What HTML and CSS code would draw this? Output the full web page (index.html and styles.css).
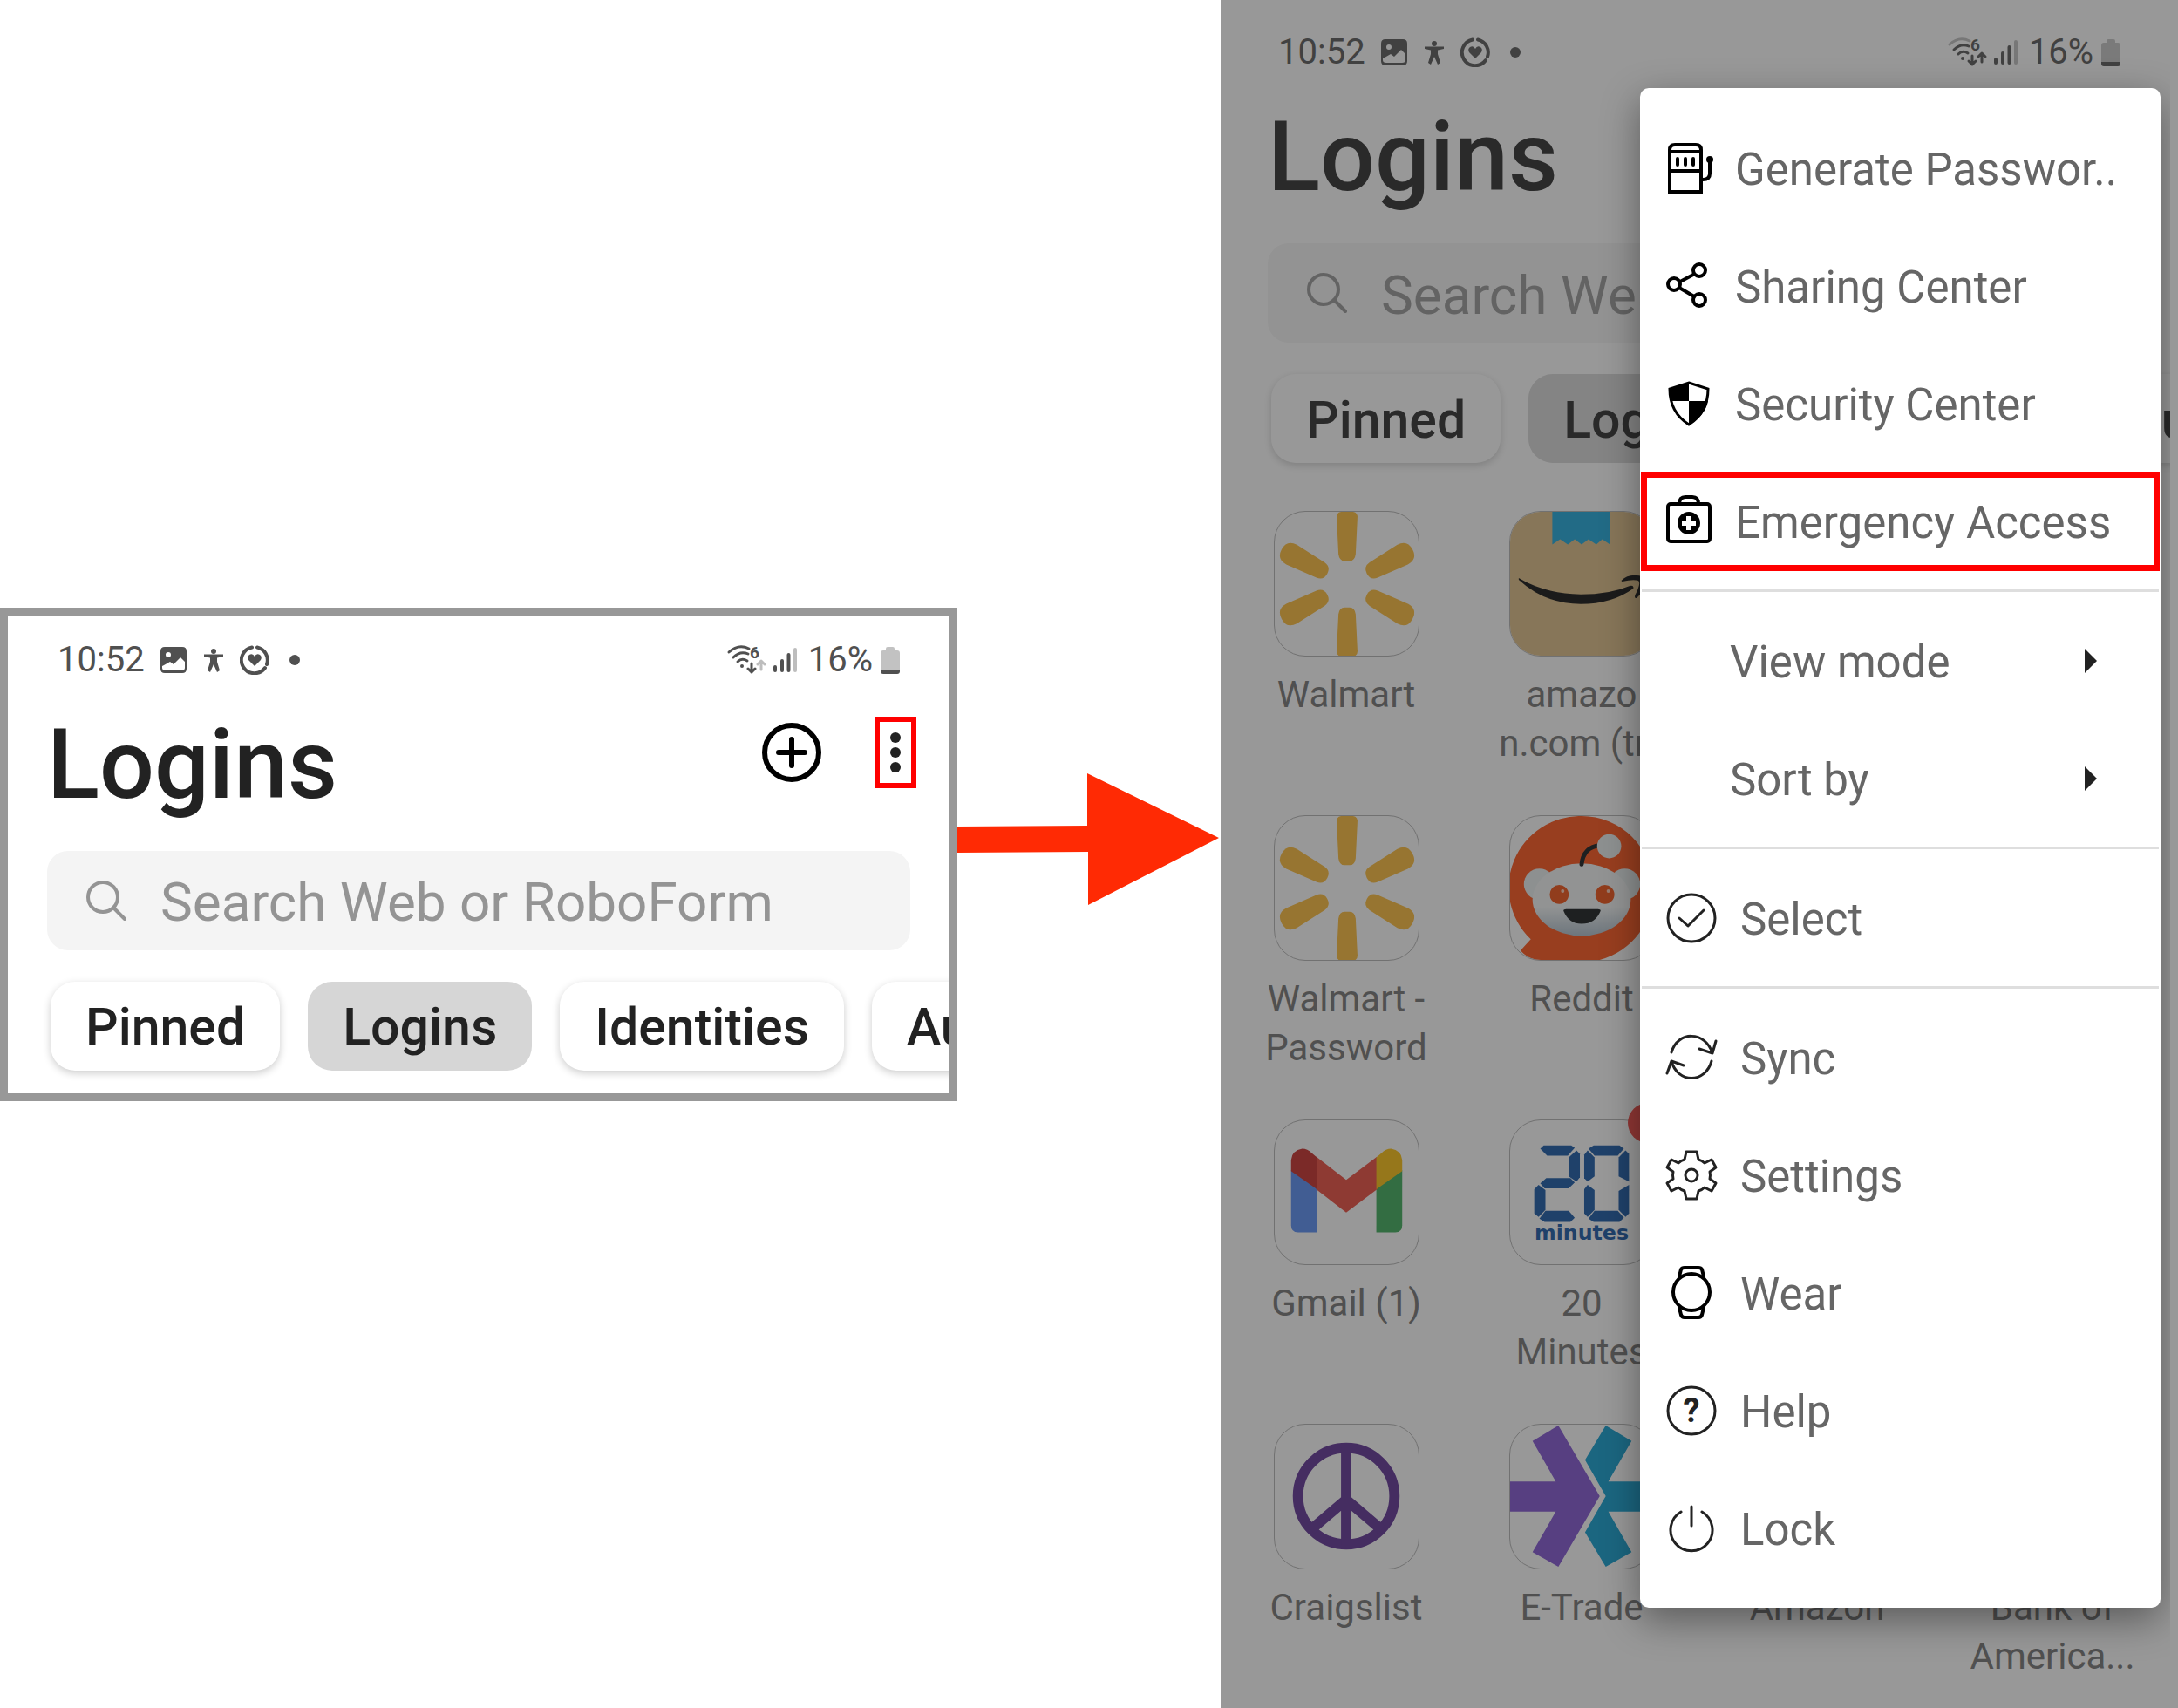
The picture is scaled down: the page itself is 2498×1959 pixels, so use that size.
FILE: index.html
```html
<!DOCTYPE html>
<html lang="en">
<head>
<meta charset="UTF-8">
<meta name="viewport" content="width=device-width, initial-scale=1.0">
<title>Logins - Emergency Access</title>
<link rel="stylesheet" href="styles.css">
</head>
<body>

<!-- shared drawings -->
<svg class="sprite" aria-hidden="true">
    <symbol id="i-image" viewBox="0 0 32 32">
        <path fill-rule="evenodd" d="M6 1H26Q31 1 31 6V26Q31 31 26 31H6Q1 31 1 26V6Q1 1 6 1ZM3 23V25Q3 28 7 28H25Q29 28 29 25V18L24 13L16 21L12 18L5 22ZM10 7A3 3 0 1 0 10 13A3 3 0 1 0 10 7Z"/>
    </symbol>
    <symbol id="i-person" viewBox="0 0 26 32">
        <circle cx="13" cy="6" r="3"/>
        <path d="M2 9.500L24 9.500L24 12L17 13.500V18L20 28L17 30L13 21L9 30L6 28L9 18V13.500L2 12Z"/>
    </symbol>
    <symbol id="i-heart" viewBox="0 0 34 34">
        <path class="line-4" d="M14 2.500A15 15 0 1 0 29 26M20 2.500A15 15 0 0 1 31 22"/>
        <path d="M17 24L10 17Q8 13 11 11Q15 9 17 13Q19 9 23 11Q26 13 24 17Z"/>
    </symbol>
    <symbol id="i-bars" viewBox="0 0 28 32">
        <path class="line-4" d="M3 24V28M11 17V28M18.500 10V28"/>
        <path class="line-4 faint" d="M26 4V28"/>
    </symbol>
    <symbol id="i-battery" viewBox="0 0 22 32">
        <path class="faint-fill" d="M6 3Q6 1 8 1H14Q16 1 16 3V5H19Q22 5 22 8V27H0V8Q0 5 3 5H6Z"/>
        <path d="M0 27H22V29Q22 32 19 32H3Q0 32 0 29Z"/>
    </symbol>
    <symbol id="i-search" viewBox="0 0 46 46">
        <circle class="line-4" cx="19" cy="19" r="17"/>
        <path class="line-4" d="M31 31L44 44"/>
    </symbol>
    <symbol id="i-plus" viewBox="0 0 68 68">
        <circle class="line-6" cx="34" cy="34" r="31"/>
        <path class="line-6" d="M34 19V49M19 34H49"/>
    </symbol>
    <symbol id="i-dots" viewBox="0 0 12 46">
        <circle cx="6" cy="6" r="6"/>
        <circle cx="6" cy="23" r="6"/>
        <circle cx="6" cy="40" r="6"/>
    </symbol>
    <symbol id="i-walmart" viewBox="0 0 167 167">
        <g fill="#fcb830">
            <path id="ray" d="M77 0H91Q97 1 96 8L94 49Q93 57 87 57H81Q75 57 74 49L72 8Q71 1 77 0Z"/>
            <path id="side-ray" d="M84 -2Q97 -2 97 11L94 49Q93 58 84 58Q75 58 74 49L71 11Q71 -2 84 -2Z" transform="rotate(62 84 84)"/>
            <use href="#side-ray" transform="rotate(56 84 84)"/>
            <use href="#ray" transform="rotate(180 84 84)"/>
            <use href="#side-ray" transform="rotate(180 84 84)"/>
            <use href="#side-ray" transform="rotate(236 84 84)"/>
        </g>
    </symbol>
</svg>

<div class="board">

    <!-- step 1: top of the Logins page -->
    <section class="phone">
        <div class="status">
            <span>10:52</span>
            <svg width="32" height="32"><use href="#i-image"/></svg>
            <svg width="26" height="32"><use href="#i-person"/></svg>
            <svg width="34" height="34"><use href="#i-heart"/></svg>
            <svg width="24" height="32"><circle cx="12" cy="16" r="6"/></svg>
            <div class="status-right">
                <svg class="wifi" width="44" height="34" viewBox="0 0 44 34">
                    <path class="line-3" d="M2 8Q13 -2 25 4M7 14Q15 6 24 10M12 19Q17 14 23 18"/>
                    <circle cx="17" cy="24" r="2"/>
                    <text x="26" y="15">6</text>
                    <path class="line-3" d="M28 21V31M24 27L28 31L32 27"/>
                    <path class="line-3 faint" d="M39 28V18M35 22L39 18L43 22"/>
                </svg>
                <svg width="28" height="32"><use href="#i-bars"/></svg>
                <span class="percent">16%</span>
                <svg width="22" height="32"><use href="#i-battery"/></svg>
            </div>
        </div>
        <div class="title-bar">
            <h1>Logins</h1>
            <div class="title-actions">
                <button class="icon-btn" aria-label="Add"><svg width="68" height="68"><use href="#i-plus"/></svg></button>
                <button class="icon-btn marked" aria-label="More"><svg width="12" height="46"><use href="#i-dots"/></svg></button>
            </div>
        </div>
        <label class="search">
            <svg width="46" height="46"><use href="#i-search"/></svg>
            <input type="text" placeholder="Search Web or RoboForm" aria-label="Search">
        </label>
        <div class="chips">
            <button class="chip">Pinned</button>
            <button class="chip active">Logins</button>
            <button class="chip">Identities</button>
            <button class="chip">Authenticator</button>
        </div>
    </section>

    <svg class="arrow" viewBox="0 0 302 186" aria-hidden="true">
        <path fill="#ff2a04" d="M0 61L149 60V0L300 74L150 151V90L0 91Z"/>
    </svg>

    <!-- step 2: the same page with the menu open -->
    <section class="phone phone-full">
        <div class="status">
            <span>10:52</span>
            <svg width="32" height="32"><use href="#i-image"/></svg>
            <svg width="26" height="32"><use href="#i-person"/></svg>
            <svg width="34" height="34"><use href="#i-heart"/></svg>
            <svg width="24" height="32"><circle cx="12" cy="16" r="6"/></svg>
            <div class="status-right">
                <svg class="wifi" width="44" height="34" viewBox="0 0 44 34">
                    <path class="line-3 faint" d="M2 8Q13 -2 25 4"/>
                    <path class="line-3" d="M7 14Q15 6 24 10M12 19Q17 14 23 18"/>
                    <circle cx="17" cy="24" r="2"/>
                    <text x="26" y="15">6</text>
                    <path class="line-3" d="M28 21V31M24 27L28 31L32 27M39 28V18M35 22L39 18L43 22"/>
                </svg>
                <svg width="28" height="32"><use href="#i-bars"/></svg>
                <span class="percent">16%</span>
                <svg width="22" height="32"><use href="#i-battery"/></svg>
            </div>
        </div>
        <div class="title-bar">
            <h1>Logins</h1>
        </div>
        <label class="search">
            <svg width="46" height="46"><use href="#i-search"/></svg>
            <input type="text" placeholder="Search Web or RoboForm" aria-label="Search">
        </label>
        <div class="chips">
            <button class="chip">Pinned</button>
            <button class="chip active">Logins</button>
            <button class="chip">Identities</button>
            <button class="chip">Authenticator</button>
        </div>

        <div class="tiles">
            <a class="tile first" href="#">
                <span class="tile-icon"><svg viewBox="0 0 167 167"><use href="#i-walmart"/></svg></span>
                <span>Walmart</span>
            </a>
            <a class="tile" href="#">
                <span class="tile-icon">
                    <svg viewBox="0 0 167 167">
                        <rect width="167" height="167" fill="#dcba80"/>
                        <path fill="#12a4da" d="M49 0H116V38L107 32L100 38L91 32L83 38L75 32L67 38L58 32L49 38Z"/>
                        <path fill="#040404" d="M10 77Q40 95 82 96Q115 96 139 86Q144 85 143 89Q118 107 82 107Q40 107 10 79Z"/>
                        <path fill="#040404" d="M129 80Q139 70 156 76Q160 88 147 100Q144 101 145 97Q152 84 149 80Q143 78 130 81Z"/>
                    </svg>
                </span>
                <span>amazo<br>n.com (tr..</span>
            </a>

            <a class="tile first" href="#">
                <span class="tile-icon"><svg viewBox="0 0 167 167"><use href="#i-walmart"/></svg></span>
                <span>Walmart - Password</span>
            </a>
            <a class="tile" href="#">
                <span class="tile-icon">
                    <svg viewBox="0 0 167 167">
                        <defs>
                            <linearGradient id="snoo" x1="0" y1="0" x2="0" y2="1">
                                <stop offset="0.6" stop-color="#f2f5f5"/>
                                <stop offset="1" stop-color="#a9bac8"/>
                            </linearGradient>
                        </defs>
                        <path fill="#ff4a0c" d="M83 0A83 83 0 0 1 166 83A83 83 0 0 1 104 167H30Q19 164 12 156L24 143A83 83 0 0 1 83 0Z"/>
                        <circle cx="34" cy="79" r="18" fill="#e8eeee"/>
                        <circle cx="133" cy="79" r="18" fill="#e8eeee"/>
                        <ellipse cx="83" cy="97" rx="57" ry="42" fill="url(#snoo)"/>
                        <path d="M83 56Q85 36 104 34" fill="none" stroke="#0a0f10" stroke-width="5" stroke-linecap="round"/>
                        <circle cx="115" cy="35" r="14" fill="#e8eeee"/>
                        <circle cx="57" cy="91" r="11" fill="#f04808"/>
                        <circle cx="110" cy="91" r="11" fill="#f04808"/>
                        <circle cx="61" cy="87" r="2" fill="#ffc8b0"/>
                        <circle cx="114" cy="87" r="2" fill="#ffc8b0"/>
                        <path d="M62 110Q62 108 65 108H102Q105 108 105 110Q99 125 83 125Q68 125 62 110Z" fill="#0a0f10"/>
                    </svg>
                </span>
                <span>Reddit</span>
            </a>

            <a class="tile first" href="#">
                <span class="tile-icon">
                    <svg viewBox="0 0 167 167">
                        <path fill="#5088f4" d="M19 58L49 78V130H27Q19 130 19 122Z"/>
                        <path fill="#34a853" d="M148 58L118 78V130H140Q148 130 148 122Z"/>
                        <path fill="#ea4335" d="M48 42L83 69L119 42V80L83 107L48 80Z"/>
                        <path fill="#c5221f" d="M19 59V46Q20 35 32 33Q38 33 43 38L49 43V80Z"/>
                        <path fill="#fbbc04" d="M148 59V46Q147 35 135 33Q129 33 124 38L118 43V80Z"/>
                    </svg>
                </span>
                <span>Gmail (1)</span>
            </a>
            <a class="tile" href="#">
                <span class="tile-icon">
                    <svg viewBox="0 0 167 167">
                        <g fill="#0c50a2">
                            <path d="M35 33L39 29H71L75 32L67 41H43Z"/>
                            <path d="M77 35L81 39V66L77 71L68 65V43Z"/>
                            <path d="M35 73L42 67H70L75 72L68 79H40Z"/>
                            <path d="M33 75L41 81V104L33 112L28 108V80Z"/>
                            <path d="M41 105H68L75 113L70 118H40L34 114Z"/>
                            <path d="M91 33L97 29H127L132 33L125 41H98Z"/>
                            <path d="M90 35L98 43V65L90 71L86 67V40Z"/>
                            <path d="M134 35L138 39V71L126 65V43Z"/>
                            <path d="M90 75L98 81V104L90 112L86 108V80Z"/>
                            <path d="M138 75V108L134 112L126 104V82Z"/>
                            <path d="M98 105H125L132 113L127 118H97L91 114Z"/>
                            <text class="minutes" x="83" y="139">minutes</text>
                        </g>
                    </svg>
                    <i class="badge"></i>
                </span>
                <span>20<br>Minutes</span>
            </a>

            <a class="tile first" href="#">
                <span class="tile-icon">
                    <svg viewBox="0 0 167 167">
                        <g fill="none" stroke="#582890" stroke-width="12">
                            <circle cx="83" cy="83" r="56"/>
                            <path d="M83 27V139M83 87L42 122M83 87L124 122"/>
                        </g>
                    </svg>
                </span>
                <span>Craigslist</span>
            </a>
            <a class="tile" href="#">
                <span class="tile-icon">
                    <svg viewBox="0 0 167 167">
                        <path fill="#7c4cd0" d="M0 66H53L26 19L56 1L104 83L56 165L26 148L53 101H0Z"/>
                        <path fill="#049ace" d="M87 41L111 1L141 19L114 66H167V101H114L141 148L111 165L87 125L111 83Z"/>
                    </svg>
                </span>
                <span>E-Trade</span>
            </a>
            <a class="tile" href="#">
                <span class="tile-icon"></span>
                <span>Amazon</span>
            </a>
            <a class="tile" href="#">
                <span class="tile-icon"></span>
                <span>Bank of America...</span>
            </a>
        </div>

        <div class="overlay"></div>

        <nav class="menu">
            <div class="menu-group">
                <button class="menu-item">
                    <svg class="menu-icon" viewBox="0 0 60 60">
                        <path class="line-4 sharp" d="M5 55V7Q5 1 11 1H35Q41 1 41 7V55ZM5 9H41M5 31H41"/>
                        <path class="line-4" d="M14 17V24M23 17V24M32 17V24M43 41Q51 41 51 34V18"/>
                        <circle cx="51" cy="18" r="4"/>
                    </svg>
                    Generate Passwor..
                </button>
                <button class="menu-item">
                    <svg class="menu-icon" viewBox="0 0 60 60">
                        <circle class="line-4" cx="10" cy="26" r="7"/>
                        <circle class="line-4" cx="39" cy="10" r="7"/>
                        <circle class="line-4" cx="39" cy="44" r="7"/>
                        <path class="line-4" d="M17 23L32 15M16 30L33 40"/>
                    </svg>
                    Sharing Center
                </button>
                <button class="menu-item">
                    <svg class="menu-icon" viewBox="0 0 60 60">
                        <path class="line-3 sharp" d="M27 4L49 11Q49 38 27 52Q5 38 5 11Z"/>
                        <path d="M27 3V25H6Q4 18 5 11ZM27 25H49Q46 41 27 53Z"/>
                    </svg>
                    Security Center
                </button>
                <button class="menu-item highlight">
                    <svg class="menu-icon" viewBox="0 0 60 60">
                        <rect class="line-4" x="3" y="8" width="48" height="43" rx="3"/>
                        <path class="line-4" d="M16 8Q16 0 23 0H31Q38 0 38 8"/>
                        <path fill-rule="evenodd" d="M27 17A13 13 0 1 0 27 43A13 13 0 1 0 27 17ZM24 22H30V27H35V33H30V38H24V33H19V27H24Z"/>
                    </svg>
                    Emergency Access
                </button>
            </div>
            <div class="menu-group submenus">
                <button class="menu-item">
                    View mode
                    <svg class="caret" width="14" height="28"><path d="M0 -2L14 12L0 26Z"/></svg>
                </button>
                <button class="menu-item">
                    Sort by
                    <svg class="caret" width="14" height="28"><path d="M0 -2L14 12L0 26Z"/></svg>
                </button>
            </div>
            <div class="menu-group actions">
                <button class="menu-item">
                    <svg class="menu-icon" viewBox="0 0 60 60">
                        <circle class="line-3" cx="30" cy="28" r="27"/>
                        <path class="line-3" d="M16 28L26 37L44 19"/>
                    </svg>
                    Select
                </button>
            </div>
            <div class="menu-group actions">
                <button class="menu-item">
                    <svg class="menu-icon" viewBox="0 0 60 60">
                        <path class="line-3" d="M7 22C14 -3 46 -3 54 23M58 9L54 23L39 18M53 32C46 58 14 58 7 32M2 46L7 32L21 37"/>
                    </svg>
                    Sync
                </button>
                <button class="menu-item">
                    <svg class="menu-icon" viewBox="0 0 60 60">
                        <path class="line-3" d="M24 1H36L38 10Q42 11 45 14L53 10L58 19L51 24Q52 28 51 32L58 37L53 46L45 42Q42 45 38 46L36 55H24L22 46Q18 45 15 42L7 46L2 37L9 32Q8 28 9 24L2 19L7 10L15 14Q18 11 22 10Z"/>
                        <circle class="line-3" cx="30" cy="28" r="7"/>
                    </svg>
                    Settings
                </button>
                <button class="menu-item">
                    <svg class="menu-icon black" viewBox="0 0 60 60">
                        <circle class="line-4" cx="30" cy="27" r="21"/>
                        <path class="line-4" d="M16 9L18 1Q19 -1 22 -1H38Q41 -1 42 1L44 9M16 45L18 53Q19 56 22 56H38Q41 56 42 53L44 45"/>
                    </svg>
                    Wear
                </button>
                <button class="menu-item">
                    <svg class="menu-icon" viewBox="0 0 60 60">
                        <circle class="line-3" cx="30" cy="28" r="27"/>
                        <text class="question" x="30" y="41">?</text>
                    </svg>
                    Help
                </button>
                <button class="menu-item">
                    <svg class="menu-icon" viewBox="0 0 60 60">
                        <path class="line-3" d="M18 9A24 24 0 1 0 42 9M30 3V25"/>
                    </svg>
                    Lock
                </button>
            </div>
        </nav>
    </section>
</div>

</body>
</html>
```

FILE: styles.css
```css
* {
    box-sizing: border-box;
}
body {
    margin: 0;
    background-color: #fff;
    color: #222;
    font-family: Roboto, "Liberation Sans", sans-serif;
}
button, input {
    font: inherit;
    color: inherit;
    background: none;
    border: none;
    padding: 0;
    margin: 0;
}
button {
    cursor: pointer;
}
svg {
    display: block;
    flex: none;
    fill: currentColor;
    overflow: visible;
}
.sprite {
    position: absolute;
    width: 0;
    height: 0;
}

/* line work */
.line-3, .line-4, .line-6 {
    fill: none;
    stroke: currentColor;
    stroke-width: 3;
    stroke-linecap: round;
    stroke-linejoin: round;
}
.line-4 {
    stroke-width: 4;
}
.line-6 {
    stroke-width: 6;
}
.sharp {
    stroke-linejoin: miter;
}
.faint {
    stroke: #bdbdbd;
}
.faint-fill {
    fill: #c2c2c2;
}

.board {
    display: grid;
    grid-template-columns: 1098fr 302fr 1098fr;
    align-items: center;
    min-height: 100vh;
}
.phone {
    position: relative;
    min-width: 0;
    padding: 27px 0 26px;
    border: 9px solid #989898;
    background-color: #fff;
    overflow: hidden;
}
.phone-full {
    align-self: stretch;
    padding-bottom: 0;
}
.arrow {
    width: 100%;
}

/* status bar */
.status {
    display: flex;
    align-items: center;
    gap: 17px;
    padding: 0 57px;
    font-size: 40px;
    line-height: 48px;
    color: #505050;
}
.status-right {
    display: flex;
    align-items: center;
    gap: 8px;
    margin-left: auto;
}
.percent {
    padding: 0 1px 0 5px;
}
.wifi text {
    font-size: 19px;
    font-weight: 700;
}

/* title */
.title-bar {
    display: flex;
    justify-content: space-between;
    align-items: flex-start;
    padding: 0 38px 0 45px;
    margin-top: 40px;
}
h1 {
    margin: 0;
    font-size: 111px;
    font-weight: 500;
    line-height: 112px;
}
.title-actions {
    display: flex;
    align-items: center;
    gap: 61px;
    height: 85px;
}
.icon-btn {
    color: #000;
}
.marked {
    padding: 12px;
    border: 6px solid #f00;
    color: #222;
}

/* search */
.search {
    display: flex;
    align-items: center;
    gap: 39px;
    height: 114px;
    margin: 43px 45px 0;
    padding: 0 45px;
    border-radius: 24px;
    background-color: #f4f4f4;
    color: #949494;
    font-size: 62px;
}
.search input {
    flex: 1;
    min-width: 0;
    padding-top: 4px;
    outline: none;
}
.search input::placeholder {
    color: #949494;
    opacity: 1;
}

/* chips */
.chips {
    display: flex;
    gap: 32px;
    margin-top: 36px;
    padding-left: 49px;
}
.chip {
    flex: none;
    height: 102px;
    padding: 2px 40px 0;
    border-radius: 28px;
    background-color: #fff;
    box-shadow: 0 3px 10px rgba(0,0,0,0.2);
    font-size: 59px;
    font-weight: 500;
}
.chip.active {
    background-color: #d6d6d6;
    box-shadow: none;
}

/* tiles */
.tiles {
    display: grid;
    grid-template-columns: repeat(4, 1fr);
    grid-auto-rows: 295px;
    gap: 54px 0;
    margin-top: 55px;
}
.tile {
    display: flex;
    flex-direction: column;
    align-items: center;
    gap: 16px;
    padding: 0 32px;
    color: #6e6e6e;
    font-size: 42px;
    line-height: 56px;
    text-align: center;
    text-decoration: none;
}
.tile.first {
    grid-column: 1;
}
.tile-icon {
    position: relative;
    flex: none;
    width: 167px;
    height: 167px;
    border: 1px solid #b0b0b0;
    border-radius: 36px;
}
.tile-icon svg {
    width: 100%;
    height: 100%;
    border-radius: 35px;
    overflow: hidden;
}
.badge {
    position: absolute;
    top: -20px;
    right: -16px;
    width: 46px;
    height: 46px;
    border-radius: 50%;
    background-color: #f03c38;
}
.minutes {
    font-family: "DejaVu Sans", sans-serif;
    font-size: 24px;
    font-weight: 700;
    text-anchor: middle;
}

.overlay {
    position: absolute;
    inset: 0;
    background-color: rgba(49,49,49,0.5);
}

/* popup menu */
.menu {
    position: absolute;
    top: 92px;
    left: 472px;
    right: 11px;
    padding: 26px 0 22px;
    border-radius: 10px;
    background-color: #fff;
    box-shadow: 0 14px 44px rgba(0,0,0,0.4);
    color: #666;
    font-size: 51px;
}
.menu-group + .menu-group {
    margin: 9px 2px 0;
    padding-top: 13px;
    border-top: 3px solid #dedede;
}
.menu-item {
    position: relative;
    display: flex;
    align-items: center;
    gap: 20px;
    width: 100%;
    height: 135px;
    padding-left: 29px;
    text-align: left;
    white-space: nowrap;
}
.menu-icon {
    width: 60px;
    height: 60px;
    color: #000;
}
.actions .menu-item {
    gap: 26px;
    padding-left: 27px;
}
.actions .menu-icon {
    color: #222;
}
.actions .menu-icon.black {
    color: #000;
}
.submenus .menu-item {
    justify-content: space-between;
    padding: 0 71px 0 101px;
}
.caret {
    color: #222;
}
.highlight::after {
    content: "";
    position: absolute;
    inset: 9px 1px 12px;
    border: 7px solid #f00;
}
.question {
    font-size: 38px;
    font-weight: 700;
    text-anchor: middle;
}
```
